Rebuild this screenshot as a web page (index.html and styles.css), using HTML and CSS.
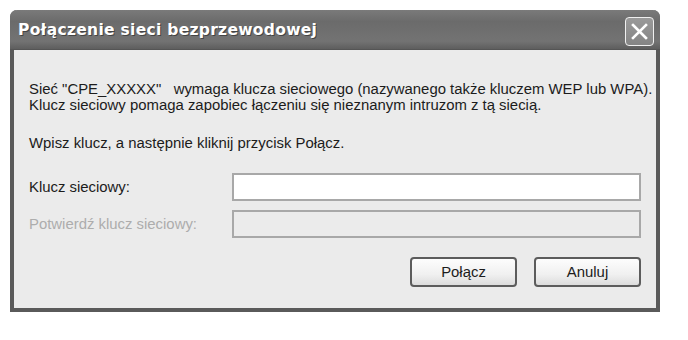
FILE: index.html
```html
<!DOCTYPE html>
<html lang="pl">
<head>
    <meta charset="UTF-8">
    <title>Połączenie sieci bezprzewodowej</title>
    <link rel="stylesheet" href="styles.css">
</head>
<body>
    <div class="window">
        <div class="titlebar">
            <span class="title">Połączenie sieci bezprzewodowej</span>
            <button class="close-btn" aria-label="Zamknij">
                <svg width="17" height="17" viewBox="0 0 17 17">
                    <path d="M2 2 L15 15 M15 2 L2 15" stroke="#fff" stroke-width="2.6" stroke-linecap="square"/>
                </svg>
            </button>
        </div>

        <div class="content">
            <p class="info">Sieć "CPE_XXXXX" &nbsp; wymaga klucza sieciowego (nazywanego także kluczem WEP lub WPA).<br>
            Klucz sieciowy pomaga zapobiec łączeniu się nieznanym intruzom z tą siecią.</p>

            <p class="info">Wpisz klucz, a następnie kliknij przycisk Połącz.</p>

            <div class="field-row">
                <label for="key">Klucz sieciowy:</label>
                <input type="password" id="key" class="field">
            </div>
            <div class="field-row disabled">
                <label for="key2">Potwierdź klucz sieciowy:</label>
                <input type="password" id="key2" class="field" disabled>
            </div>

            <div class="buttons">
                <button class="btn">Połącz</button>
                <button class="btn">Anuluj</button>
            </div>
        </div>
    </div>
</body>
</html>
```

FILE: styles.css
```css
/* Okno dialogowe */
body {
    margin: 0;
    padding: 10px;
    background-color: #fff;
    font-family: "Liberation Sans", Arial, sans-serif;
}

.window {
    width: 650px;
    height: 302px;
    box-sizing: border-box;
    background-color: #ebebeb;
    border: 4px solid #5a5a5a;
    border-top: none;
    border-radius: 7px 7px 0 0;
    display: flex;
    flex-direction: column;
}

.titlebar {
    height: 40px;
    margin: 0 -4px;
    padding: 0 6px 0 8px;
    display: flex;
    align-items: center;
    justify-content: space-between;
    background: linear-gradient(#7a7a7a, #6b6b6b 30%, #737373 80%, #5e5e5e);
    border-radius: 7px 7px 0 0;
    border-bottom: 1px solid #555;
    box-sizing: border-box;
}

.title {
    color: #fff;
    font-family: "DejaVu Sans", sans-serif;
    font-weight: bold;
    font-size: 15.5px;
    letter-spacing: 0.3px;
    text-shadow: 1px 1px 0 #444;
}

.close-btn {
    width: 29px;
    height: 29px;
    padding: 0;
    margin-top: 3px;
    border: 1px solid #f0f0f0;
    border-radius: 4px;
    background: linear-gradient(#9a9a9a, #858585);
    display: flex;
    align-items: center;
    justify-content: center;
}

.content {
    flex: 1;
    padding: 31px 4px 0 15px;
    font-size: 14.9px;
    color: #1c1c1c;
}

.info {
    margin: 0 0 22px 0;
    line-height: 16px;
    white-space: nowrap;
}

.field-row {
    display: flex;
    align-items: center;
    margin-bottom: 9px;
}

.field-row label {
    width: 203px;
}

.field-row.disabled label {
    color: #adadad;
}

.field {
    width: 409px;
    height: 28px;
    box-sizing: border-box;
    border: 2px solid #a8a8a8;
    background-color: #fff;
    margin: 0;
}

.field:disabled {
    background-color: #ebebeb;
}

.buttons {
    display: flex;
    justify-content: flex-end;
    gap: 17px;
    margin-top: 19px;
    padding-right: 11px;
}

.btn {
    width: 107px;
    height: 30px;
    border: 2px solid #5c5c5c;
    border-radius: 4px;
    background: linear-gradient(#fdfdfd, #f0f0f0 60%, #dcdcdc);
    font-family: "Liberation Sans", Arial, sans-serif;
    font-size: 14.9px;
    color: #1c1c1c;
}
```
